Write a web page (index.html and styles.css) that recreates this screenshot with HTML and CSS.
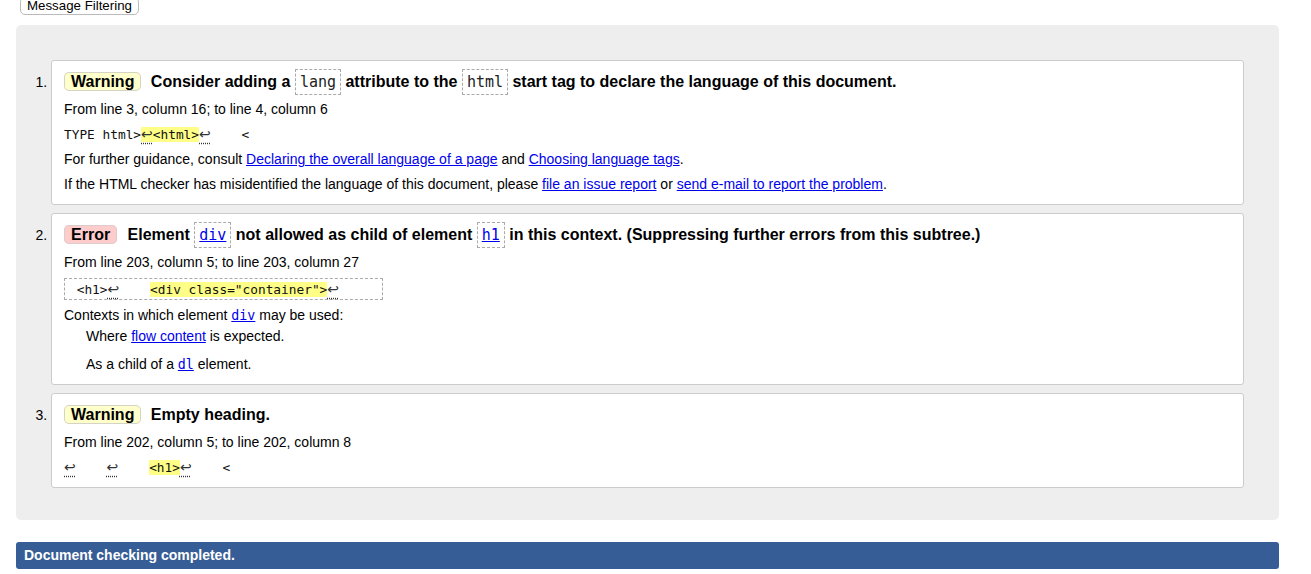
FILE: index.html
```html
<!DOCTYPE html>
<html lang="en">
<head>
<meta charset="utf-8">
<title>Nu Html Checker results</title>
<link rel="stylesheet" href="styles.css">
</head>
<body>
<div class="page">
  <div class="filters"><button class="filter-btn" type="button">Message Filtering</button></div>
  <div class="results">
    <ol class="msgs">
      <li class="msg">
        <p class="head"><strong class="badge warn">Warning</strong> Consider adding a <code>lang</code> attribute to the <code>html</code> start tag to declare the language of this document.</p>
        <p class="loc">From line 3, column 16; to line 4, column 6</p>
        <p class="extract"><code>TYPE html&gt;<mark><b class="lf">↩</b>&lt;html&gt;</mark><b class="lf">↩</b>    &lt;</code></p>
        <p>For further guidance, consult <a href="#">Declaring the overall language of a page</a> and <a href="#">Choosing language tags</a>.</p>
        <p>If the HTML checker has misidentified the language of this document, please <a href="#">file an issue report</a> or <a href="#">send e-mail to report the problem</a>.</p>
      </li>
      <li class="msg">
        <p class="head"><strong class="badge error">Error</strong> Element <code><a href="#">div</a></code> not allowed as child of element <code><a href="#">h1</a></code> in this context. (Suppressing further errors from this subtree.)</p>
        <p class="loc">From line 203, column 5; to line 203, column 27</p>
        <p class="extract boxed"><code> &lt;h1&gt;<b class="lf">↩</b>    <mark>&lt;div class="container"&gt;</mark><b class="lf">↩</b>     </code></p>
        <p class="contexts">Contexts in which element <code class="inl"><a href="#">div</a></code> may be used:</p>
        <dl class="ctx">
          <dd>Where <a href="#">flow content</a> is expected.</dd>
          <dd>As a child of a <code class="inl"><a href="#">dl</a></code> element.</dd>
        </dl>
      </li>
      <li class="msg">
        <p class="head"><strong class="badge warn">Warning</strong> Empty heading.</p>
        <p class="loc">From line 202, column 5; to line 202, column 8</p>
        <p class="extract"><code><b class="lf">↩</b>    <b class="lf">↩</b>    <mark>&lt;h1&gt;</mark><b class="lf">↩</b>    &lt;</code></p>
      </li>
    </ol>
  </div>
  <p class="done">Document checking completed.</p>
</div>
</body>
</html>
```
FILE: styles.css
```css
body {
  margin: 0;
  font-family: "Liberation Sans", Arial, sans-serif;
  font-size: 14px;
  color: #000;
  background: #fff;
}

.page {
  padding: 0 32px 0 16px;
}

.filters {
  display: flex;
  padding-left: 4px;
  margin-bottom: 10px;
}

.filter-btn {
  margin-top: -3px;
  font-family: "Liberation Sans", Arial, sans-serif;
  font-size: 13.3px;
  line-height: 15px;
  color: #000;
  background: #fff;
  border: 1px solid #bbb;
  border-radius: 5px;
  padding: 0 6px 1px;
}

.results {
  background: #eee;
  border-radius: 5px;
  padding: 35px 35px 32px;
}

.msgs {
  margin: 0;
  padding: 0;
  list-style: decimal outside;
}

.msg {
  background: #fff;
  border: 1px solid #ccc;
  border-radius: 3px;
  padding: 10px 12px 11px;
  margin-bottom: 8px;
}

.msg:last-child {
  margin-bottom: 0;
}

.msg p {
  margin: 8px 0 0;
  line-height: 17px;
}

.msg p.head {
  margin-top: 0;
  font-size: 16px;
  font-weight: bold;
  line-height: 22px;
}

.head code {
  font-family: "DejaVu Sans Mono", monospace;
  font-size: 15px;
  font-weight: normal;
  line-height: 1;
  color: #222;
  border: 1px dashed #aaa;
  padding: 3px 4px;
}

.badge {
  border: 1px solid #d4d4c4;
  border-radius: 5px;
  padding: 0 6px;
  margin-right: 5px;
}

.badge.warn {
  background: #ffc;
}

.badge.error {
  background: #fcc;
  border-color: #dcc;
  margin-right: 6px;
}

a {
  color: #00e;
}

.extract code {
  font-family: "DejaVu Sans Mono", monospace;
  font-size: 12.8px;
  white-space: pre;
  color: #111;
}

.msg p.boxed {
  margin-top: 7px;
}

.boxed code {
  display: block;
  width: max-content;
  border: 1px dashed #aaa;
  padding: 2px 4px 1px;
}

.lf {
  font-family: "DejaVu Sans", sans-serif;
  font-weight: normal;
  font-size: 14px;
  color: #333;
  text-decoration: underline dotted #333;
  text-underline-offset: 4px;
}

mark {
  background: #ff8;
  color: inherit;
}

.msg p.contexts {
  margin-top: 7px;
}

.inl {
  font-family: "DejaVu Sans Mono", monospace;
  font-size: 13.3px;
}

.msg dl.ctx {
  margin: 4px 0 0;
}

.ctx dd {
  margin: 0 0 0 22px;
  line-height: 17px;
}

.ctx dd + dd {
  margin-top: 11px;
}

.done {
  margin: 22px 0 0;
  background: #365d95;
  color: #fff;
  font-weight: bold;
  font-size: 14px;
  line-height: 17px;
  padding: 5px 8px;
  border-radius: 3px;
}
```
